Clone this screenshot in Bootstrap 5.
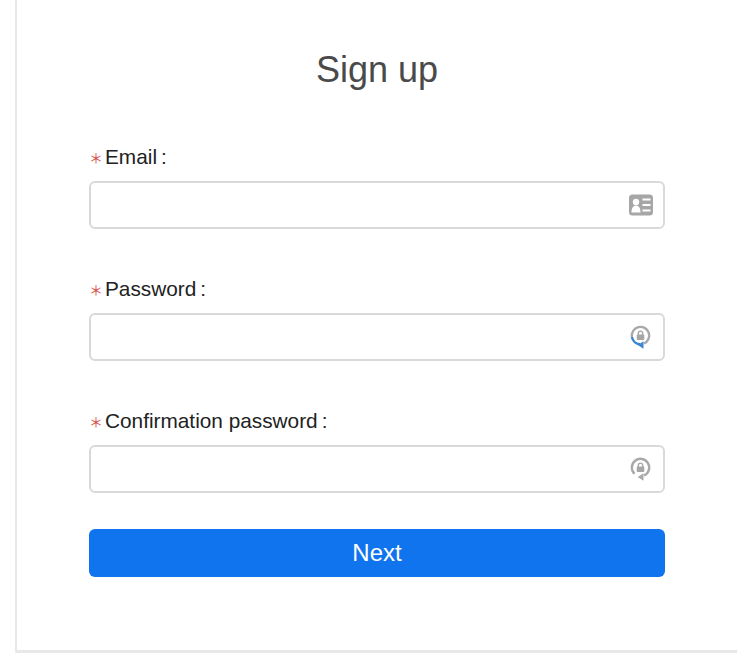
<!DOCTYPE html>
<html lang="en">
<head>
<meta charset="utf-8">
<title>Sign up</title>
<link href="https://cdn.jsdelivr.net/npm/bootstrap@5.3.0/dist/css/bootstrap.min.css" rel="stylesheet">
<style>
html, body { height: 671px; overflow: hidden; background: #fff; font-family: "Liberation Sans", Arial, sans-serif; }
.signup-shell { width: 722px; height: 653px; margin: 0 0 0 15px; padding: 0 72px 0 72px; background: #fff; border-left: 2px solid #e8e8e8; border-bottom: 3px solid #e8e8e8; border-bottom-left-radius: 2px; }
.signup-title { font-size: 36px; line-height: 42px; font-weight: 400; color: #4a4a4a; margin: 0; padding-top: 49px; height: 133px; text-align: center; }
.signup-field { height: 132px; }
.signup-label { display: flex; align-items: center; height: 48px; margin: 0; font-size: 20.8px; color: #222; }
.signup-label .req { color: #d4504c; font-size: 14px; width: 16px; font-family: "Noto Sans CJK SC", sans-serif; line-height: 1; text-align: left; }
.signup-label .colon { margin-left: 4px; }
.signup-input-wrap { position: relative; }
.signup-input { height: 48px; border: 2px solid #d9d9d9; border-radius: 6px; padding-right: 48px; box-shadow: none; }
.signup-icon { position: absolute; right: 11px; top: 11px; width: 26px; height: 26px; }
.signup-next { display: block; width: 100%; height: 48px; padding: 0; margin-top: 0; font-size: 24px; line-height: 1; border: 0; border-radius: 6px; background: #0f74ee; color: #fff; }
</style>
</head>
<body>
<div class="signup-shell">
  <h1 class="signup-title">Sign up</h1>
  <form>
    <div class="signup-field">
      <label class="signup-label" for="em"><span class="req">＊</span>Email<span class="colon">:</span></label>
      <div class="signup-input-wrap">
        <input id="em" class="form-control signup-input" type="text">
        <svg class="signup-icon" viewBox="0 0 26 26"><rect x="1" y="2.500" width="24" height="21" rx="3.500" fill="#a6a6a6"/><circle cx="8" cy="10" r="3.200" fill="#fff"/><path d="M3.500 20.500c0-5 2-7 4.500-7s4.500 2 4.500 7z" fill="#fff"/><path d="M14.500 7.500h8M14.500 13h8M14.500 18.500h8" stroke="#fff" stroke-width="2.200"/></svg>
      </div>
    </div>
    <div class="signup-field">
      <label class="signup-label" for="pw"><span class="req">＊</span>Password<span class="colon">:</span></label>
      <div class="signup-input-wrap">
        <input id="pw" class="form-control signup-input" type="password">
        <svg class="signup-icon" viewBox="0 0 26 26"><path d="M3.900 13A8.700 8.700 0 1 1 16 19.500" fill="none" stroke="#a9a9a9" stroke-width="2.400"/><path d="M3.900 13A8.700 8.700 0 0 0 12 20.200" fill="none" stroke="#3f86d0" stroke-width="2.400"/><path d="M15.500 17.200l-5.800 3.800 5.800 3.800z" fill="#3f86d0"/><rect x="8.700" y="10.500" width="7.600" height="5.500" rx="1" fill="#a6a6a6"/><path d="M10.300 11V9.300a2.200 2.200 0 0 1 4.400 0V11" fill="none" stroke="#a6a6a6" stroke-width="1.400"/></svg>
      </div>
    </div>
    <div class="signup-field">
      <label class="signup-label" for="cp"><span class="req">＊</span>Confirmation password<span class="colon">:</span></label>
      <div class="signup-input-wrap">
        <input id="cp" class="form-control signup-input" type="password">
        <svg class="signup-icon" viewBox="0 0 26 26"><path d="M6.500 17.800A8.700 8.700 0 1 1 16 19.500" fill="none" stroke="#a9a9a9" stroke-width="2.400"/><path d="M15.500 17.200l-5.800 3.800 5.800 3.800z" fill="#a9a9a9"/><rect x="8.700" y="10.500" width="7.600" height="5.500" rx="1" fill="#a6a6a6"/><path d="M10.300 11V9.300a2.200 2.200 0 0 1 4.400 0V11" fill="none" stroke="#a6a6a6" stroke-width="1.400"/></svg>
      </div>
    </div>
    <button type="button" class="btn btn-primary signup-next">Next</button>
  </form>
</div>
<script src="https://cdn.jsdelivr.net/npm/bootstrap@5.3.0/dist/js/bootstrap.bundle.min.js"></script>
</body>
</html>
